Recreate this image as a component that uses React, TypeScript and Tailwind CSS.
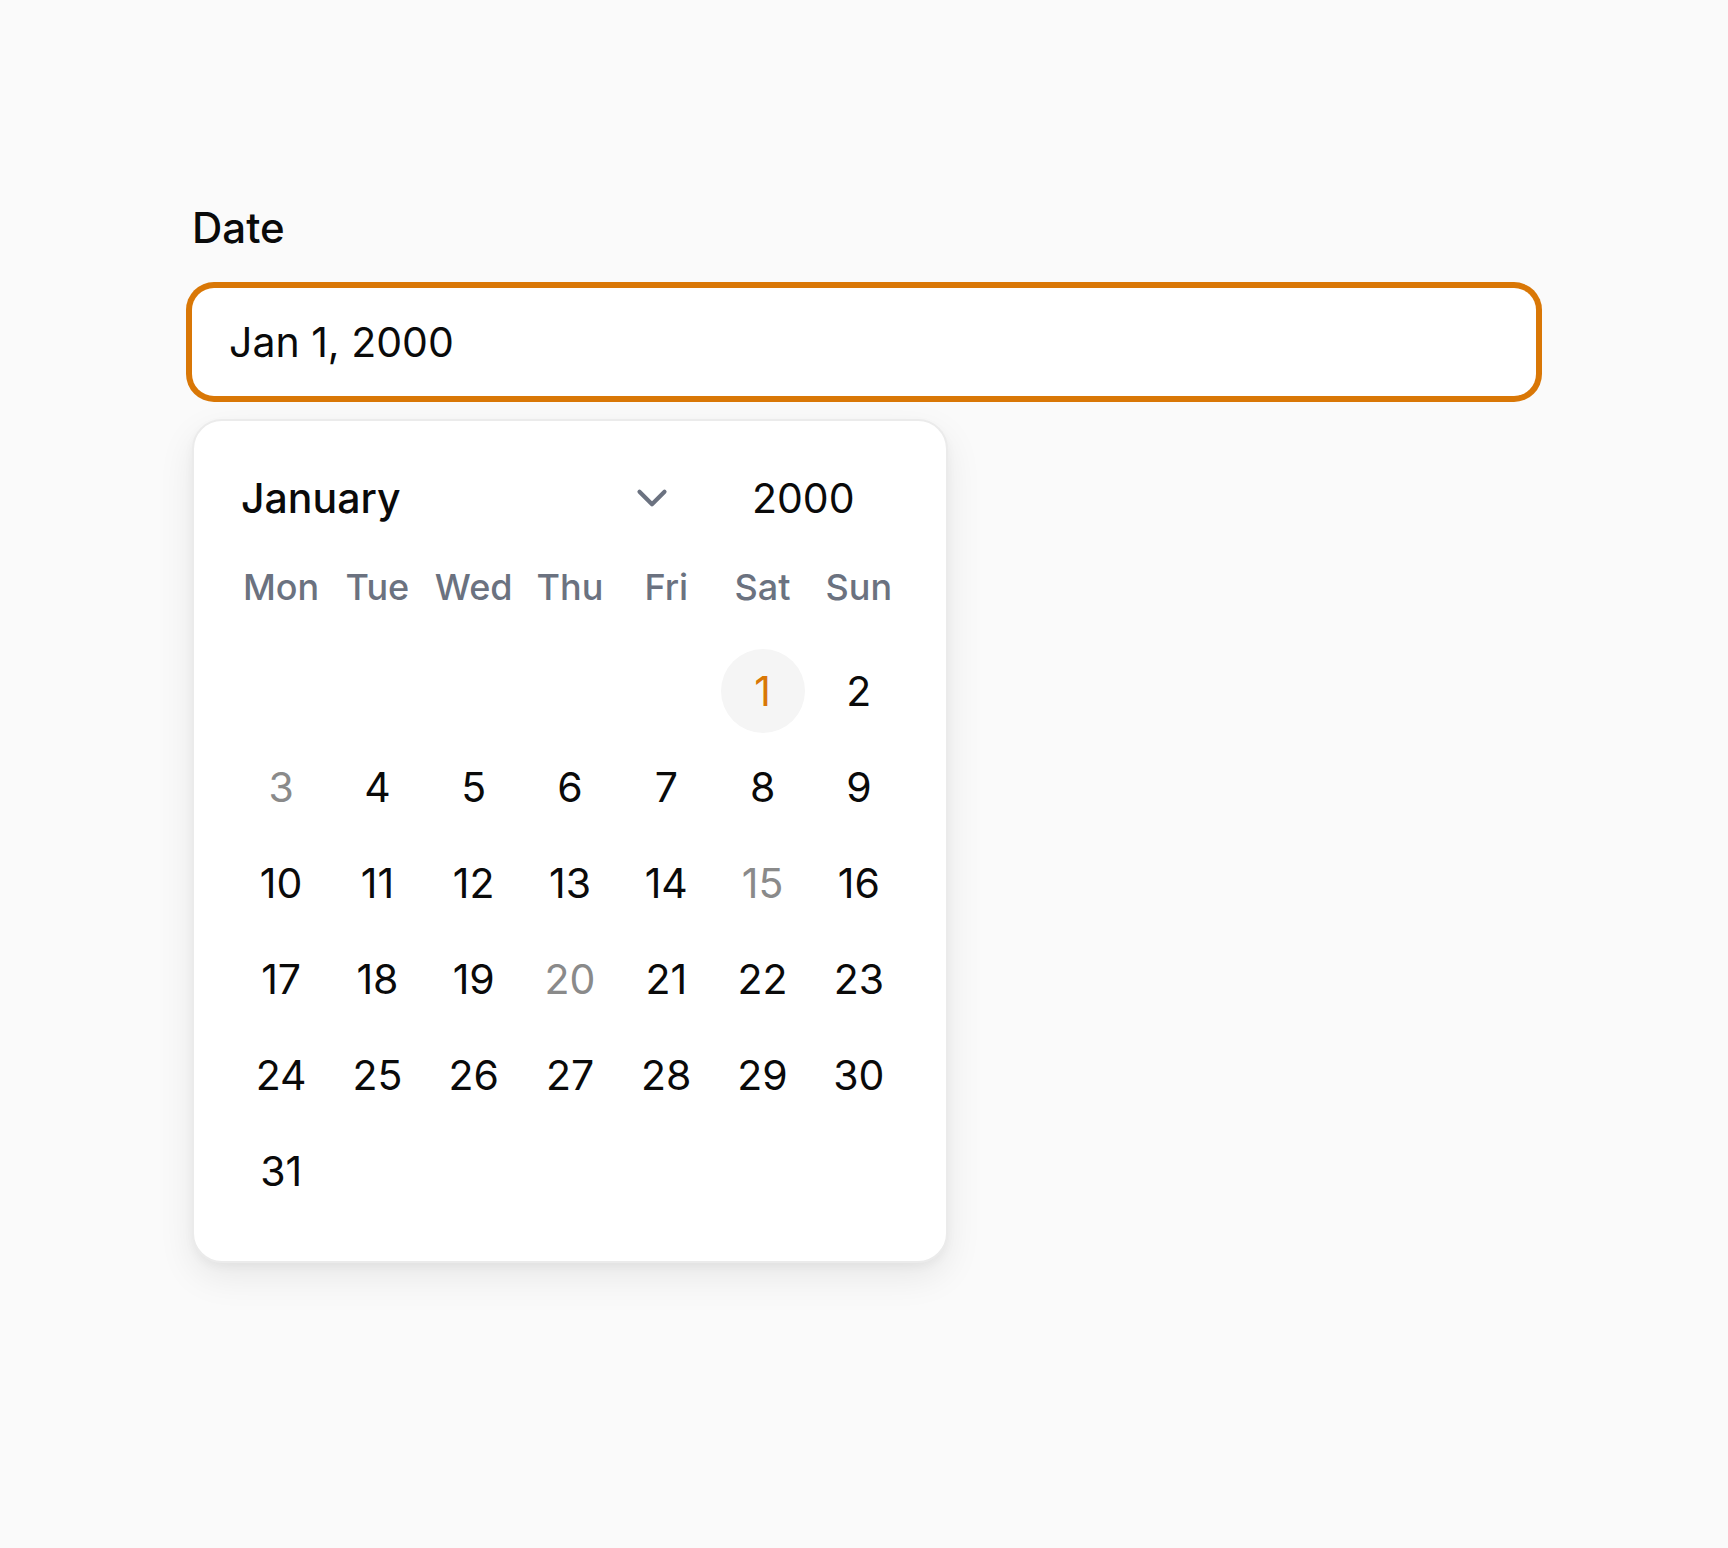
import { ChevronDown } from 'lucide-react';

const weekdays = ['Mon', 'Tue', 'Wed', 'Thu', 'Fri', 'Sat', 'Sun'];

// Jan 2000 starts on a Saturday
const cells: (number | null)[] = [
  ...Array(5).fill(null),
  ...Array.from({ length: 31 }, (_, i) => i + 1),
];

const muted = [3, 15, 20];
const selected = 1;

export default function App() {
  return (
    <div className="min-h-screen bg-[#fafafa] font-['Inter','Liberation_Sans',sans-serif] text-[#0a0a0a]">
      <div className="w-[1344px] mx-auto pt-[204px]">
        <label className="block text-[42px] leading-[48px] font-medium">Date</label>
        <div className="mt-[36px] h-[108px] bg-white rounded-[22px] ring-[6px] ring-[#d97706] flex items-center pl-[37px]">
          <span className="text-[41px] leading-[48px]">Jan 1, 2000</span>
        </div>

        <div className="mt-[23px] w-[756px] bg-white border-2 border-[#ebebeb] rounded-[30px] px-[39px] pt-[41px] pb-[42px] shadow-[0_14px_36px_rgba(0,0,0,0.08),0_4px_10px_rgba(0,0,0,0.04)]">
          <div className="flex h-[72px] items-center">
            <div className="w-[457px] flex items-center justify-between pl-[8px] pr-[13px]">
              <span className="text-[41px] leading-[48px] font-medium">January</span>
              <ChevronDown size={50} strokeWidth={2} className="text-[#6b7280]" />
            </div>
            <div className="flex-1 pl-[62px]">
              <span className="text-[41px] leading-[48px]">2000</span>
            </div>
          </div>

          <div className="grid grid-cols-7 h-[105px] items-center">
            {weekdays.map((d) => (
              <div key={d} className="text-center text-[36px] leading-[44px] font-medium text-[#6b7280]">
                {d}
              </div>
            ))}
          </div>

          <div className="grid grid-cols-7 mt-[4px]">
            {cells.map((n, i) => (
              <div key={i} className="h-[96px] flex items-center justify-center">
                {n !== null && (
                  <div
                    className={`w-[84px] h-[84px] rounded-full flex items-center justify-center text-[41px] leading-[48px] ${
                      n === selected
                        ? 'bg-[#f5f5f5] text-[#d97706]'
                        : muted.includes(n)
                        ? 'text-[#8a8a8a]'
                        : 'text-[#0a0a0a]'
                    }`}
                  >
                    {n}
                  </div>
                )}
              </div>
            ))}
          </div>
        </div>
      </div>
    </div>
  );
}
